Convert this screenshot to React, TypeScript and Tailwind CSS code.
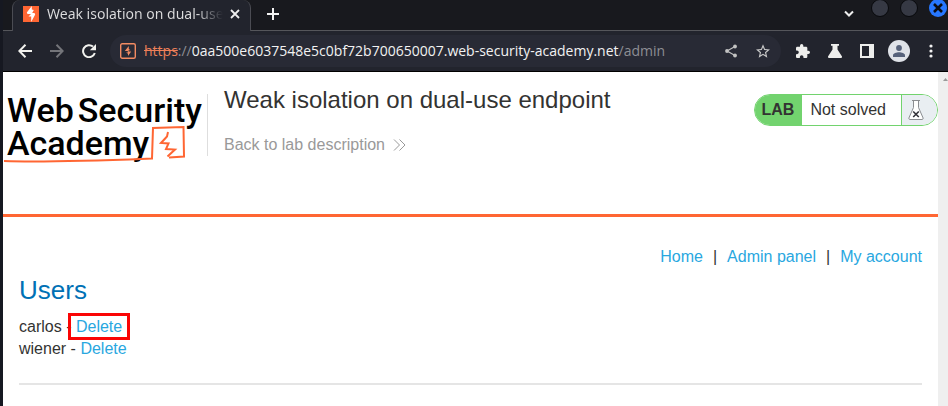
import React from "react";

const users = ["carlos", "wiener"];

const iconButton = "flex shrink-0 items-center justify-center";

function BrowserTabs() {
  return (
    <div className="flex h-[31px] border-b border-[#55565b] bg-[#18191e] pl-[9px]">
      <div className="-mb-px flex h-[31px] w-[239px] shrink-0 items-center rounded-t-lg border-x border-[#4b4c53] bg-[#22242d] pb-[4px] pl-[10px] text-[#dededf]">
        <svg viewBox="0 0 16 16" className="h-4 w-4 shrink-0" aria-hidden="true">
          <rect width="16" height="16" fill="#ff6633" />
          <path d="M8.800 0 3.800 6.500 4.500 8H8L5.500 10.500H8.200V16l4-7.500L11.500 7H9.200l1.600-3L8.800 3.500Z" fill="#fff" />
        </svg>
        <span className="ml-2 w-[176px] shrink-0 overflow-hidden bg-linear-to-r from-[#dededf] from-85% to-[#22242d] bg-clip-text whitespace-nowrap text-transparent">
          Weak isolation on dual-use
        </span>
        <button aria-label="Close tab" className={`${iconButton} ml-[7px]`}>
          <svg viewBox="0 0 10 10" className="h-[10px] w-[10px]" stroke="#eee" strokeWidth="1.8">
            <path d="M1 1l8 8M9 1 1 9" />
          </svg>
        </button>
      </div>
      <button aria-label="New tab" className={`${iconButton} ml-[15px] h-[28px] w-[14px]`}>
        <svg viewBox="0 0 12 12" className="h-3 w-3" stroke="#f2f2f2" strokeWidth="2">
          <path d="M6 0v12M0 6h12" />
        </svg>
      </button>
      <div className="ml-auto flex items-start pr-[1px]">
        <button aria-label="Search tabs" className={`${iconButton} mt-[10px] mr-[17px]`}>
          <svg viewBox="0 0 10 8" className="h-2 w-[10px]" fill="none" stroke="#eee" strokeWidth="2">
            <path d="m1 1.500 4 4 4-4" />
          </svg>
        </button>
        <div className="-mt-[1px] flex gap-[11px]">
          <button aria-label="Minimize" className="h-[18px] w-[18px] rounded-full border border-[#08090c] bg-[#363944]" />
          <button aria-label="Maximize" className="h-[18px] w-[18px] rounded-full border border-[#08090c] bg-[#363944]" />
          <button aria-label="Close window" className={`${iconButton} h-[18px] w-[18px] rounded-full bg-[#2777ff]`}>
            <svg viewBox="0 0 10 10" className="h-[10px] w-[10px]" stroke="#0b0d14" strokeWidth="2.6">
              <path d="M1 1l8 8M9 1 1 9" />
            </svg>
          </button>
        </div>
      </div>
    </div>
  );
}

function Toolbar() {
  return (
    <div className="flex h-[41px] items-center border-b border-black bg-[#22242d] pr-[14px] pl-[15px]">
      <button aria-label="Back" className={iconButton}>
        <svg viewBox="0 0 14 14" className="h-[14px] w-[14px]" fill="none" stroke="#f2f2ee" strokeWidth="2">
          <path d="M14 7H1.500M7.500.8 1.300 7l6.200 6.200" />
        </svg>
      </button>
      <button aria-label="Forward" className={`${iconButton} ml-[18px]`}>
        <svg viewBox="0 0 14 14" className="h-[14px] w-[14px]" fill="none" stroke="#74757a" strokeWidth="2">
          <path d="M0 7h12.500M6.500.8 12.700 7l-6.200 6.200" />
        </svg>
      </button>
      <button aria-label="Reload" className={`${iconButton} ml-[18px]`}>
        <svg viewBox="0 0 14 14" className="h-[14px] w-[14px]">
          <path d="M12.800 9A6 6 0 1 1 11 2.600" fill="none" stroke="#f2f2ee" strokeWidth="2" />
          <path d="M14 0v6.200H7.800Z" fill="#f2f2ee" />
        </svg>
      </button>
      <div className="ml-[14px] flex h-8 grow items-center rounded-full bg-[#282a35] pr-[11px] pl-[10px]">
        <svg viewBox="0 0 16 16" className="h-4 w-4 shrink-0" aria-hidden="true">
          <rect x=".7" y=".7" width="14.600" height="14.600" rx="1.500" fill="none" stroke="#f28b62" strokeWidth="1.400" />
          <path d="M8.800 3 4.800 8h3v1.500H6L8 10.700V13l3.200-4.400H8.600V7.200h2L8.800 6Z" fill="#f28b62" />
        </svg>
        <div className="ml-2 grow font-['Open_Sans','Noto_Sans',sans-serif] whitespace-nowrap text-[#8d8e94]">
          <span className="text-[#ee8059] line-through">https</span>
          <span>://</span>
          <span className="text-[#f2f2f2]">0aa500e6037548e5c0bf72b700650007.web-security-academy.net</span>
          <span>/admin</span>
        </div>
        <button aria-label="Share" className={iconButton}>
          <svg viewBox="0 0 12 14" className="h-[14px] w-3" fill="#c2c2c2">
            <path d="M10 2.500 2 7l8 4.500" fill="none" stroke="#c2c2c2" strokeWidth="1.200" />
            <circle cx="10" cy="2.500" r="1.900" />
            <circle cx="2" cy="7" r="1.900" />
            <circle cx="10" cy="11.500" r="1.900" />
          </svg>
        </button>
        <button aria-label="Bookmark" className={`${iconButton} ml-[19px]`}>
          <svg viewBox="2 2 20 19" className="h-[14px] w-[14px]" fill="#c8c8c8">
            <path d="m22 9.240-7.190-.62L12 2 9.190 8.630 2 9.240l5.460 4.730L5.820 21 12 17.270 18.180 21l-1.630-7.030L22 9.240zM12 15.400l-3.760 2.270 1-4.280-3.320-2.880 4.380-.38L12 6.100l1.710 4.040 4.380.38-3.320 2.880 1 4.280L12 15.400z" />
          </svg>
        </button>
      </div>
      <button aria-label="Extensions" className={`${iconButton} ml-[15px]`}>
        <svg viewBox="2 1 21 21" className="h-[14px] w-[14px]" fill="#eeeeec">
          <path d="M20.500 11H19V7c0-1.100-.9-2-2-2h-4V3.500a2.500 2.500 0 0 0-5 0V5H4c-1.100 0-2 .9-2 2v3.800h1.500a2.700 2.700 0 0 1 0 5.400H2V20c0 1.100.9 2 2 2h3.800v-1.500a2.700 2.700 0 0 1 5.400 0V22H17c1.100 0 2-.9 2-2v-4h1.500a2.500 2.500 0 0 0 0-5Z" />
        </svg>
      </button>
      <button aria-label="Experiments" className={`${iconButton} ml-[18px]`}>
        <svg viewBox="0 0 14 14" className="h-[14px] w-[14px]" fill="#eeeeec">
          <path d="M3 0h8v1.800H9.500V5.500L14 12.500c.2.800-.2 1.500-1 1.500H1c-.8 0-1.200-.7-1-1.500L4.500 5.500V1.800H3Z" />
        </svg>
      </button>
      <button aria-label="Side panel" className={`${iconButton} ml-[18px]`}>
        <svg viewBox="0 0 14 14" className="h-[14px] w-[14px]">
          <path fillRule="evenodd" d="M0 0h14v14H0ZM2 2v10h7V2Z" fill="#eeeeec" />
        </svg>
      </button>
      <button aria-label="Profile" className={`${iconButton} ml-[14px] h-[22px] w-[22px] rounded-full bg-[#dfe2e8]`}>
        <svg viewBox="0 0 12 12" className="h-3 w-3" fill="#56617a">
          <circle cx="6" cy="3" r="2.900" />
          <path d="M0 12V10.300C0 8.200 3.500 7.300 6 7.300s6 .9 6 3V12Z" />
        </svg>
      </button>
      <button aria-label="Menu" className={`${iconButton} ml-[18px]`}>
        <svg viewBox="0 0 6 14" className="h-[14px] w-[6px]" fill="#f2f2f2">
          <circle cx="3" cy="2" r="1.600" />
          <circle cx="3" cy="7" r="1.600" />
          <circle cx="3" cy="12" r="1.600" />
        </svg>
      </button>
    </div>
  );
}

function Logo() {
  return (
    <a
      href="#academy"
      className="relative block h-[75px] w-[204px] shrink-0 pl-1 font-['Roboto',sans-serif] text-[34px] leading-[33px] font-medium text-black"
    >
      <span className="flex gap-[4px]">
        <span>Web</span>
        <span>Security</span>
      </span>
      <span className="block">Academy</span>
      <svg viewBox="0 0 204 75" className="absolute inset-0 h-[75px] w-[204px]" fill="none" stroke="#ff6633" aria-hidden="true">
        <path d="M1 67c45 1.500 95-.5 148-2.500l1-30.500 30.500-1 .5 29.500-15 1" strokeWidth="2" />
        <path d="M165 38l-1 4.500-6 6.500 7.500.5-2.500 5.500 9 .5-7.500 7" strokeWidth="2" />
      </svg>
    </a>
  );
}

function LabStatus() {
  return (
    <div className="mt-[6px] flex h-8 overflow-hidden rounded-full border border-[#72d36e] leading-[30px]">
      <span className="bg-[#72d36e] pr-2 pl-[7px] font-bold">LAB</span>
      <span className="border-r border-[#72d36e] pr-[15px] pl-2">Not solved</span>
      <span className="flex w-[35px] items-center bg-[#e9eef2] pl-[6px]">
        <svg viewBox="0 0 16 20" className="h-5 w-4" fill="none" aria-label="Lab flask">
          <path d="M5.500.5v7L.8 18.200c0 .7.400 1.300 1.200 1.300h12c.8 0 1.200-.6 1.200-1.300L10.500 7.500v-7M4 .5h8" fill="#fff" stroke="#8b8d91" />
          <path d="m5.200 11.500 5.600 5.500M10.800 11.500 5.200 17" stroke="#33333a" strokeWidth="1.600" />
        </svg>
      </span>
    </div>
  );
}

export default function App() {
  return (
    <div className="min-h-screen bg-[#161821] pl-[3px] font-['Noto_Sans',sans-serif] text-sm">
      <BrowserTabs />
      <Toolbar />
      <div className="flex min-h-[calc(100vh-72px)] bg-white font-['Liberation_Sans',Arial,sans-serif] text-base text-[#333332]">
        <div className="grow">
          <header className="flex h-[145px] items-start border-b-[3px] border-[#ff6633] pt-4">
            <div className="pt-[6px]">
              <Logo />
            </div>
            <div className="mt-[6px] h-[62px] border-l border-[#dedede]" />
            <div className="ml-4 grow">
              <h1 className="text-2xl leading-6">Weak isolation on dual-use endpoint</h1>
              <a href="#lab" className="mt-[23px] inline-flex items-center gap-2 leading-5 text-[#999]">
                Back to lab description
                <svg viewBox="0 0 13 12" className="h-3 w-[13px]" fill="none" stroke="#999" aria-hidden="true">
                  <path d="m1 .5 5.500 5.500L1 11.500M6.500.5 12 6l-5.500 5.500" />
                </svg>
              </a>
            </div>
            <LabStatus />
          </header>
          <main className="px-4 pt-[30px]">
            <nav className="flex justify-end gap-[10px] leading-5 text-[#29a7df]">
              <a href="#home">Home</a>
              <span className="text-[#333332]">|</span>
              <a href="#admin">Admin panel</a>
              <span className="text-[#333332]">|</span>
              <a href="#account">My account</a>
            </nav>
            <h2 className="mt-[7px] text-[26px] leading-8 text-[#0071b5]">Users</h2>
            <ul className="mt-[10px] leading-[22px]">
              {users.map((name, index) => (
                <li key={name}>
                  {name} -{" "}
                  <span className="relative">
                    <a href={`#delete-${name}`} className="text-[#29a7df]">
                      Delete
                    </a>
                    {index === 0 && (
                      <span className="absolute -inset-x-2 -top-[5px] -bottom-[5px] border-[3px] border-[#fa0505]" />
                    )}
                  </span>
                </li>
              ))}
            </ul>
            <hr className="mt-[23px] border-t-2 border-[#e5e5e5]" />
          </main>
        </div>
        <div className="w-[10px] shrink-0 bg-[#efefef] pt-[6px]">
          <svg viewBox="0 0 10 4" className="h-1 w-[10px]" fill="#9a9a9a" aria-hidden="true">
            <path d="M7.500 0 10 3H5Z" />
          </svg>
        </div>
      </div>
    </div>
  );
}
